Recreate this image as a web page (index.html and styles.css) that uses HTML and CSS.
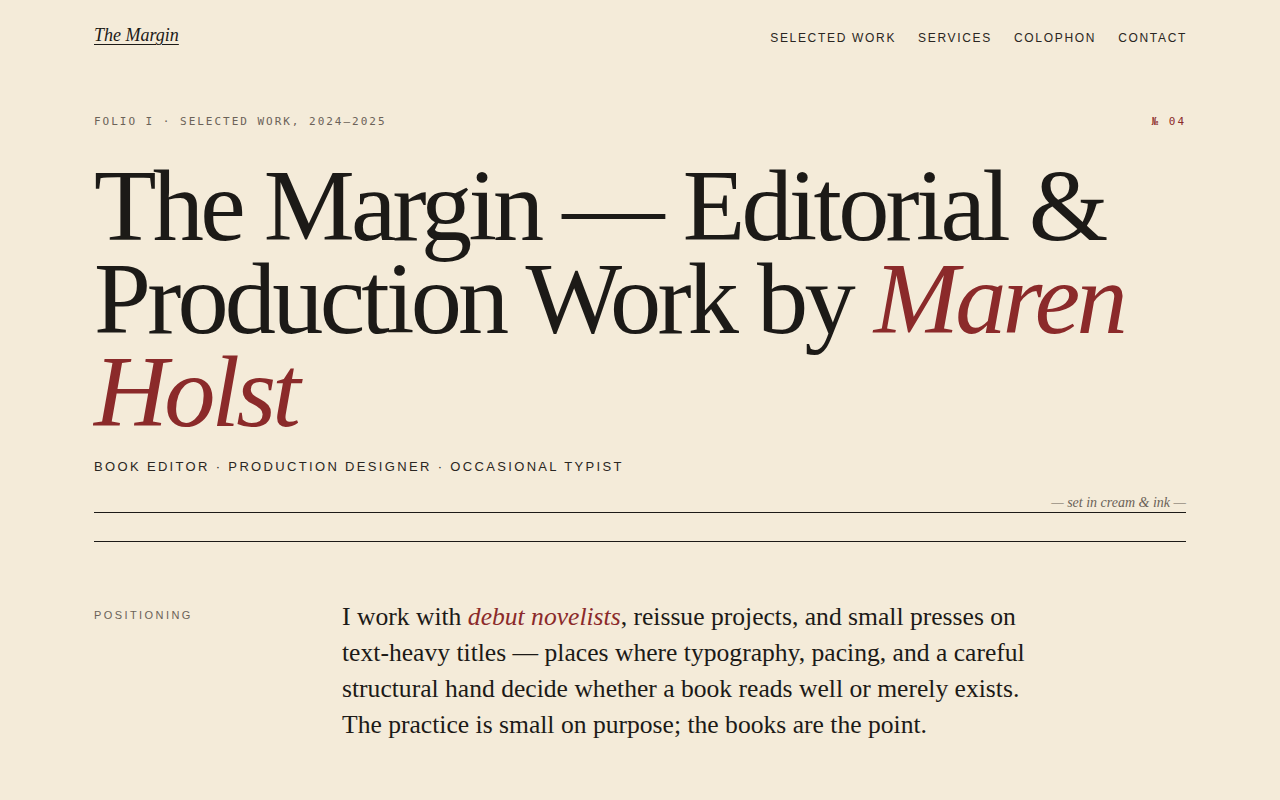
FILE: index.html
```html
<!DOCTYPE html>
<html lang="en">
<head>
<meta charset="utf-8">
<title>The Margin — Maren Holst</title>
<link rel="stylesheet" href="styles.css">
</head>
<body>
<div class="page">
  <header class="masthead">
    <a class="logo" href="#">The Margin</a>
    <nav class="nav">
      <a href="#">Selected Work</a>
      <a href="#">Services</a>
      <a href="#">Colophon</a>
      <a href="#">Contact</a>
    </nav>
  </header>

  <section class="hero">
    <div class="folio">
      <span>Folio I · Selected Work, 2024–2025</span>
      <span class="folio-no">№ 04</span>
    </div>
    <h1 class="title">The Margin — Editorial &amp; Production Work by <em>Maren Holst</em></h1>
    <p class="roles">Book Editor · Production Designer · Occasional Typist</p>
    <div class="rule-note">— set in cream &amp; ink —</div>
    <div class="rule-gap"></div>
  </section>

  <section class="positioning">
    <div class="label">Positioning</div>
    <p class="lede">I work with <em>debut novelists</em>, reissue projects, and small presses on text-heavy titles — places where typography, pacing, and a careful structural hand decide whether a book reads well or merely exists. The practice is small on purpose; the books are the point.</p>
  </section>
</div>
</body>
</html>
```

FILE: styles.css
```css
html, body {
  margin: 0;
  padding: 0;
}
body {
  background: #f4ebd9;
  color: #1c1a17;
  font-family: "Liberation Serif", "Times New Roman", serif;
}
.page {
  padding: 0 94px;
}
.masthead {
  display: flex;
  justify-content: space-between;
  align-items: center;
  padding-top: 24px;
}
.logo {
  font-family: "Liberation Serif", serif;
  font-style: italic;
  font-size: 18px;
  line-height: 22px;
  color: #1c1a17;
  text-decoration: underline;
  text-underline-offset: 3px;
  text-decoration-thickness: 1px;
}
.nav {
  display: flex;
  gap: 22px;
  padding-top: 6px;
  margin-right: -1px;
}
.nav a {
  font-family: "Liberation Sans", Arial, sans-serif;
  font-size: 12px;
  letter-spacing: 0.14em;
  text-transform: uppercase;
  color: #2a2622;
  text-decoration: none;
}
.hero {
  padding-top: 69px;
}
.folio {
  display: flex;
  justify-content: space-between;
  font-family: "DejaVu Sans Mono", monospace;
  font-size: 11px;
  letter-spacing: 0.18em;
  text-transform: uppercase;
  color: #6b6258;
}
.folio-no {
  color: #8b2a2a;
}
.title {
  margin: 31px 0 0;
  font-weight: 400;
  font-size: 102.4px;
  line-height: 0.91;
  letter-spacing: -0.037em;
  color: #1c1a17;
}
.title em {
  color: #8b2a2a;
  font-style: italic;
}
.roles {
  margin: 20px 0 0;
  font-family: "Liberation Sans", Arial, sans-serif;
  font-size: 13px;
  letter-spacing: 0.18em;
  text-transform: uppercase;
  color: #2a2622;
}
.rule-note {
  margin-top: 21px;
  text-align: right;
  font-style: italic;
  font-size: 14px;
  color: #6b6258;
  padding-bottom: 1px;
  border-bottom: 1px solid #1c1a17;
}
.rule-gap {
  height: 28px;
  border-bottom: 1px solid #1c1a17;
}
.positioning {
  display: grid;
  grid-template-columns: 248px 700px;
  padding-top: 57px;
}
.label {
  font-family: "Liberation Sans", Arial, sans-serif;
  font-size: 11px;
  letter-spacing: 0.22em;
  text-transform: uppercase;
  color: #6b6258;
  padding-top: 10px;
}
.lede {
  margin: 0;
  font-size: 25.6px;
  line-height: 36px;
}
.lede em {
  color: #8b2a2a;
}
```
